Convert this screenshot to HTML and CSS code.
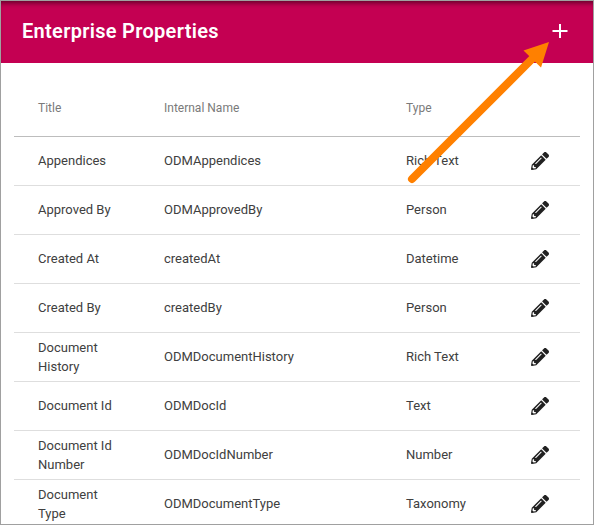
FILE: index.html
```
<!DOCTYPE html>
<html lang="en">
<head>
<meta charset="utf-8">
<title>Enterprise Properties</title>
<link rel="stylesheet" href="styles.css">
</head>
<body>
<svg class="defs" aria-hidden="true"><symbol id="pencil" viewBox="0 0 512 512"><path d="M497.9 142.1l-46.1 46.1c-4.7 4.7-12.3 4.7-17 0l-111-111c-4.7-4.7-4.7-12.3 0-17l46.1-46.1c18.7-18.7 49.1-18.7 67.9 0l60.1 60.1c18.8 18.7 18.8 49.1 0 67.9zM284.2 99.8L21.6 362.4.4 483.9c-2.9 16.4 11.4 30.6 27.8 27.8l121.5-21.3 262.6-262.6c4.7-4.7 4.7-12.3 0-17l-111-111c-4.8-4.7-12.4-4.7-17.1 0zM124.1 339.9c-5.5-5.5-5.5-14.3 0-19.8l154-154c5.5-5.5 14.3-5.5 19.8 0s5.5 14.3 0 19.8l-154 154c-5.5 5.5-14.3 5.5-19.8 0zM88 424h48v36.3l-64.5 11.3-31.1-31.1L51.7 376H88v48z"/></symbol></svg>
<div class="panel">
  <header class="toolbar">
    <h1 class="heading">Enterprise Properties</h1>
    <svg class="add" viewBox="0 0 16 16"><path d="M8 1v14M0.5 8h15"/></svg>
  </header>
  <main class="list">
    <div class="row head"><span>Title</span><span>Internal Name</span><span>Type</span></div>
    <div class="row"><span>Appendices</span><span>ODMAppendices</span><span>Rich Text</span><svg class="edit"><use href="#pencil"/></svg></div>
    <div class="row"><span>Approved By</span><span>ODMApprovedBy</span><span>Person</span><svg class="edit"><use href="#pencil"/></svg></div>
    <div class="row"><span>Created At</span><span>createdAt</span><span>Datetime</span><svg class="edit"><use href="#pencil"/></svg></div>
    <div class="row"><span>Created By</span><span>createdBy</span><span>Person</span><svg class="edit"><use href="#pencil"/></svg></div>
    <div class="row"><span>Document History</span><span>ODMDocumentHistory</span><span>Rich Text</span><svg class="edit"><use href="#pencil"/></svg></div>
    <div class="row"><span>Document Id</span><span>ODMDocId</span><span>Text</span><svg class="edit"><use href="#pencil"/></svg></div>
    <div class="row"><span>Document Id Number</span><span>ODMDocIdNumber</span><span>Number</span><svg class="edit"><use href="#pencil"/></svg></div>
    <div class="row"><span>Document Type</span><span>ODMDocumentType</span><span>Taxonomy</span><svg class="edit"><use href="#pencil"/></svg></div>
  </main>
  <svg class="arrow" viewBox="400 35 155 155"><path class="shaft" d="M412 179L532 59"/><path class="tip" d="M549 42L523.5 50.5L541 67.5Z"/></svg>
</div>
</body>
</html>
```
FILE: styles.css
```
* { box-sizing: border-box; }
body { margin: 0; font-family: Roboto, sans-serif; }
.defs { position: absolute; width: 0; height: 0; }
.panel {
  position: relative;
  width: 594px;
  height: 525px;
  overflow: hidden;
  border: 1px solid #a0a0a0;
  background: #fff;
}
.toolbar {
  display: flex;
  align-items: center;
  justify-content: space-between;
  height: 62px;
  padding: 0 25px 2px 21px;
  background: #c40052;
  box-shadow: inset 0 5px 5px -3px rgba(0, 0, 0, .5);
}
.heading {
  margin: 0;
  color: #fff;
  font-size: 20px;
  font-weight: 600;
  line-height: 24px;
  letter-spacing: .3px;
}
.add { width: 16px; height: 16px; fill: none; stroke: #fff; stroke-width: 2; }
.list { margin: 17px 13px 0 13px; }
.row {
  display: grid;
  grid-template-columns: 126px 242px 125px 18px;
  align-items: center;
  height: 49px;
  padding-left: 24px;
  border-bottom: 1px solid #dedede;
  color: #404040;
  font-size: 13px;
  line-height: 19px;
}
.row span { padding: 0 36px 1px 0; }
.row.head {
  height: 57px;
  border-color: #bdbdbd;
  color: #7a7a7a;
  font-size: 12px;
}
.row.head span { padding-bottom: 0; }
.edit { width: 18px; height: 18px; fill: #212121; }
.arrow { position: absolute; left: 399px; top: 34px; width: 155px; height: 155px; }
.shaft { fill: none; stroke: #ff8000; stroke-width: 8; stroke-linecap: round; }
.tip { fill: #ff8000; }
```
